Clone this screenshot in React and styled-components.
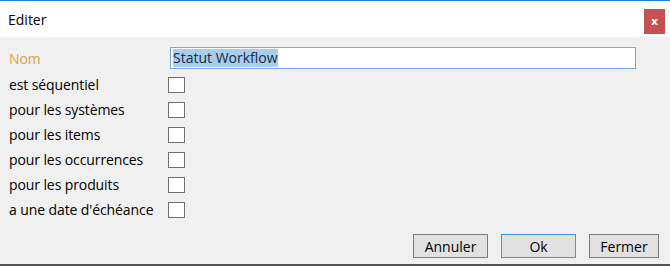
import React from "react";
import styled, { createGlobalStyle } from "styled-components";

const Global = createGlobalStyle`
  html, body { margin: 0; padding: 0; background: #f0f0f0; }
  body { font-family: "Open Sans", "Noto Sans", "Liberation Sans", sans-serif; }
  * { box-sizing: border-box; }
`;

const Dialog = styled.div`
  width: 670px;
  height: 266px;
  display: flex;
  flex-direction: column;
  background: #f0f0f0;
  border-bottom: 2px solid #555555;
  font-size: 14px;
  color: #000;
`;

const TitleBar = styled.div`
  height: 37px;
  border-top: 1px solid #1883d7;
  background: #ffffff;
  display: flex;
  align-items: flex-start;
  justify-content: space-between;
  padding: 0 5px 0 8px;
`;

const Title = styled.div`
  font-size: 14px;
  line-height: 37px;
  height: 36px;
`;

const CloseButton = styled.div`
  margin-top: 8px;
  width: 21px;
  height: 25px;
  background: #c75050;
  color: #ffffff;
  display: flex;
  align-items: center;
  justify-content: center;
  font-family: "DejaVu Sans", sans-serif;
  font-size: 11px;
  font-weight: bold;
`;

const Body = styled.div`
  flex: 1;
  display: flex;
  flex-direction: column;
  padding: 10px 11px 0 9px;
`;

const Form = styled.div`
  display: flex;
  flex-direction: column;
`;

const Row = styled.div`
  display: flex;
  align-items: center;
  height: ${(p) => (p.$field ? "22px" : "25px")};
  margin-bottom: ${(p) => (p.$field ? "3px" : "0")};
`;

const Label = styled.div`
  width: 159px;
  color: ${(p) => (p.$accent ? "#e3a13a" : "#000000")};
  white-space: nowrap;
  letter-spacing: -0.1px;
`;

const TextField = styled.div`
  margin-left: 2px;
  width: 466px;
  height: 22px;
  background: #ffffff;
  border: 1px solid #7aa7e0;
  display: flex;
  align-items: center;
  padding: 0 2px;
  font-size: 14px;
  color: #1b2a3f;
`;

const Selected = styled.span`
  background: #a7cdf0;
  line-height: 18px;
`;

const Checkbox = styled.div`
  width: 17px;
  height: 16px;
  background: #ffffff;
  border: 1px solid #707070;
`;

const Buttons = styled.div`
  margin-top: auto;
  margin-bottom: 6px;
  display: flex;
  justify-content: flex-end;
  gap: 13px;
`;

const Button = styled.div`
  width: ${(p) => p.$w || 75}px;
  height: 24px;
  background: #e1e1e1;
  border: 1px solid ${(p) => (p.$default ? "#3c97e6" : "#7a7a7a")};
  display: flex;
  align-items: center;
  justify-content: center;
  font-size: 14px;
`;

const options = [
  "est séquentiel",
  "pour les systèmes",
  "pour les items",
  "pour les occurrences",
  "pour les produits",
  "a une date d'échéance",
];

export default function App() {
  return (
    <>
      <Global />
      <Dialog>
        <TitleBar>
          <Title>Editer</Title>
          <CloseButton>x</CloseButton>
        </TitleBar>
        <Body>
          <Form>
            <Row $field>
              <Label $accent>Nom</Label>
              <TextField>
                <Selected>Statut Workflow</Selected>
              </TextField>
            </Row>
            {options.map((o) => (
              <Row key={o}>
                <Label>{o}</Label>
                <Checkbox />
              </Row>
            ))}
          </Form>
          <Buttons>
            <Button>Annuler</Button>
            <Button $default>Ok</Button>
            <Button $w={70}>Fermer</Button>
          </Buttons>
        </Body>
      </Dialog>
    </>
  );
}
